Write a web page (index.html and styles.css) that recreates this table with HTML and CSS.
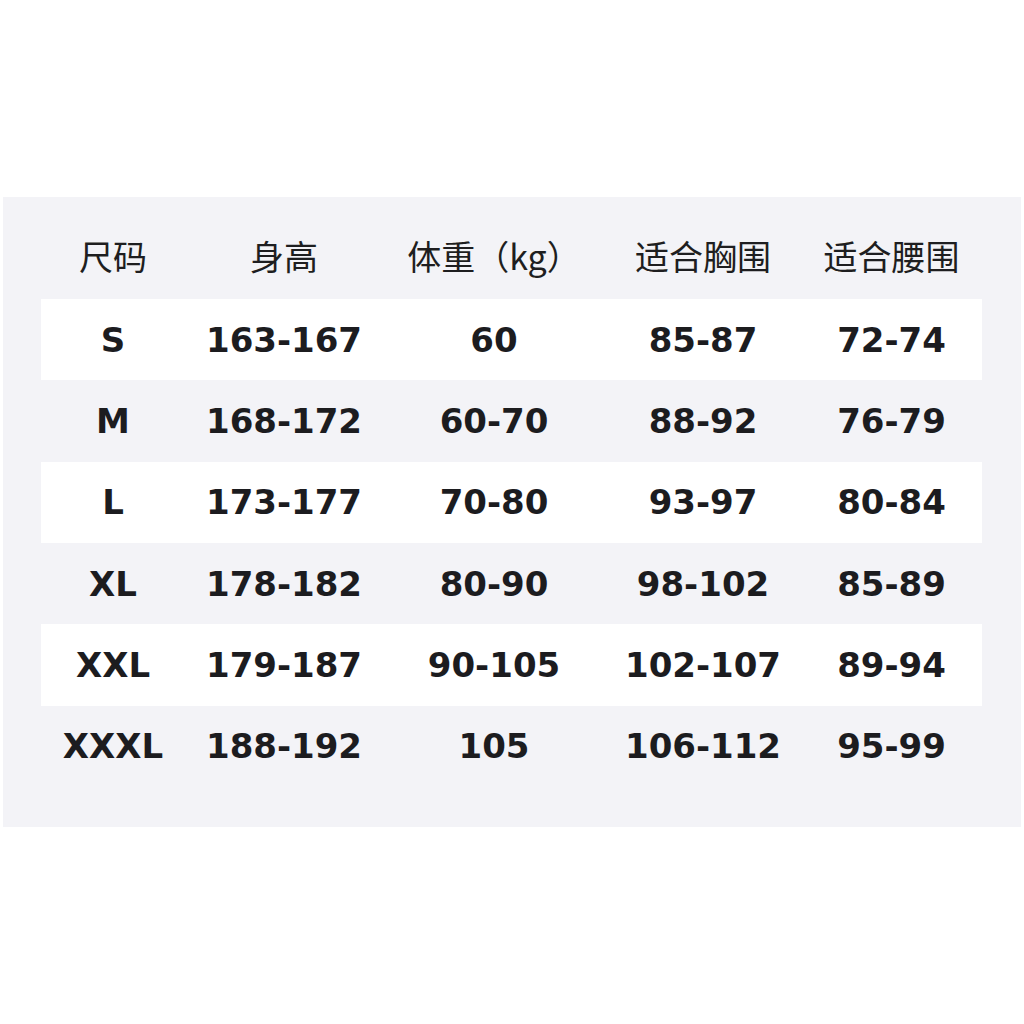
FILE: index.html
```html
<!DOCTYPE html>
<html lang="zh">
<head>
<meta charset="utf-8">
<link rel="stylesheet" href="styles.css">
</head>
<body>
<div class="panel">
  <div class="row head">
    <div>尺码</div><div>身高</div><div>体重（kg）</div><div>适合胸围</div><div>适合腰围</div>
  </div>
  <div class="row w"><div>S</div><div>163-167</div><div>60</div><div>85-87</div><div>72-74</div></div>
  <div class="row"><div>M</div><div>168-172</div><div>60-70</div><div>88-92</div><div>76-79</div></div>
  <div class="row w"><div>L</div><div>173-177</div><div>70-80</div><div>93-97</div><div>80-84</div></div>
  <div class="row"><div>XL</div><div>178-182</div><div>80-90</div><div>98-102</div><div>85-89</div></div>
  <div class="row w"><div>XXL</div><div>179-187</div><div>90-105</div><div>102-107</div><div>89-94</div></div>
  <div class="row"><div>XXXL</div><div>188-192</div><div>105</div><div>106-112</div><div>95-99</div></div>
</div>
</body>
</html>
```
FILE: styles.css
```css
html, body { margin: 0; padding: 0; background: #ffffff; }
body { width: 1024px; height: 1024px; overflow: hidden; }
.panel {
  margin: 197px 0 0 3px;
  width: 1018px;
  height: 630px;
  box-sizing: border-box;
  padding: 0 39px 0 38px;
  background: #f3f3f7;
}
.row {
  display: grid;
  grid-template-columns: 144px 198px 222px 196px 181px;
  height: 81.33px;
  align-items: center;
  font-family: "DejaVu Sans", sans-serif;
  font-weight: bold;
  font-size: 34px;
  color: #1c1c1f;
}
.row > div { text-align: center; white-space: nowrap; }
.row.w { background: #ffffff; }
.row.head {
  height: 102px;
  padding-top: 14px;
  box-sizing: border-box;
  font-family: "Noto Sans CJK SC", sans-serif;
  font-weight: normal;
  font-size: 34px;
  color: #1e1e20;
}
```
